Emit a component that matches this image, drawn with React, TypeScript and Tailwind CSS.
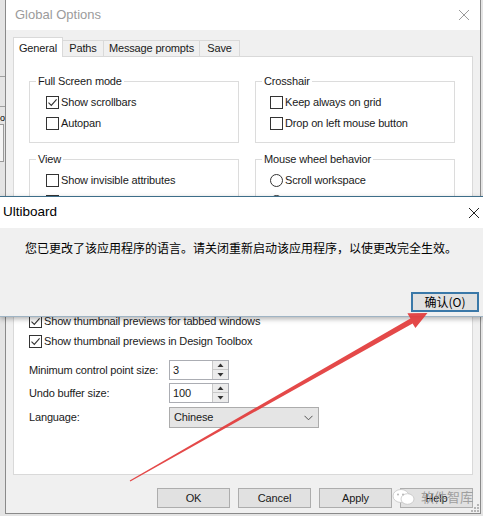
import React from "react";

const Check = ({ checked }: { checked?: boolean }) => (
  <span className="flex h-[13px] w-[13px] shrink-0 items-center justify-center border border-[#333333] bg-white">
    {checked && (
      <svg width="11" height="11" viewBox="0 0 11 11">
        <path d="M1.5 5.6 L4.3 8.4 L9.6 2.4" fill="none" stroke="#333333" strokeWidth="1.1" />
      </svg>
    )}
  </span>
);

const Radio = ({ checked }: { checked?: boolean }) => (
  <span className="flex h-[13px] w-[13px] shrink-0 items-center justify-center rounded-full border border-[#333333] bg-white">
    {checked && <span className="h-[5px] w-[5px] rounded-full bg-[#333333]" />}
  </span>
);

const Row = ({ children, label }: { children: React.ReactNode; label: string }) => (
  <div className="flex h-[21px] items-center gap-[2px]">
    {children}
    <span className="whitespace-nowrap">{label}</span>
  </div>
);

const Group = ({
  title,
  width,
  pad,
  children,
}: {
  title: string;
  width: string;
  pad: string;
  children: React.ReactNode;
}) => (
  <fieldset className={`border border-[#dcdcdc] ${width}`}>
    <legend className="ml-[6px] px-[2px] leading-[16px]">{title}</legend>
    <div className={`pt-[3px] pb-[8px] ${pad}`}>{children}</div>
  </fieldset>
);

const SpinArrows = () => (
  <div className="flex w-[16px] flex-col border-l border-[#c8c8c8]">
    <div className="flex h-[9px] items-center justify-center border-b border-[#c8c8c8] bg-[#ececec]">
      <svg width="7" height="5" viewBox="0 0 7 5">
        <path d="M3.5 0.5 L6.5 4 L0.5 4 Z" fill="#333333" />
      </svg>
    </div>
    <div className="flex flex-1 items-center justify-center bg-[#ececec]">
      <svg width="7" height="5" viewBox="0 0 7 5">
        <path d="M0.5 1 L6.5 1 L3.5 4.5 Z" fill="#333333" />
      </svg>
    </div>
  </div>
);

const Spin = ({ value }: { value: string }) => (
  <div className="flex h-[20px] w-[60px] border border-[#abadb3] bg-white">
    <span className="flex-1 pl-[3px] leading-[18px]">{value}</span>
    <SpinArrows />
  </div>
);

const Button = ({ label }: { label: string }) => (
  <div className="flex h-[20px] w-[73px] items-center justify-center border border-[#adadad] bg-[#e1e1e1]">
    {label}
  </div>
);

export default function App() {
  return (
    <div className="relative h-[516px] w-[483px] overflow-hidden bg-[#e4e4e4] font-['Liberation_Sans',Arial,sans-serif] text-[11px] tracking-[-0.15px] text-[#1a1a1a]">
      {/* window behind, left edge */}
      <div className="absolute left-[-40px] top-[76px] h-[1px] w-[45px] bg-[#a0a0a0]" />
      <div className="absolute left-[-40px] top-[106px] h-[1px] w-[45px] bg-[#a0a0a0]" />
      <div className="absolute left-0 top-[111px] text-[9px] leading-[14px] text-black">o</div>
      <div className="absolute left-[-40px] top-[124px] h-[38px] w-[44px] border border-[#9a9a9a] bg-[#f4f4f4]" />

      {/* Global Options window */}
      <div className="relative ml-[5px] flex h-[514px] w-[476px] flex-col border-x border-b border-[#8a8a8a] bg-[#f0f0f0]">
        <div className="flex h-[30px] shrink-0 items-center justify-between bg-white pl-[9px] pr-[10px]">
          <span className="text-[13px] tracking-normal text-[#9b9b9b]">Global Options</span>
          <svg width="12" height="12" viewBox="0 0 12 12">
            <path d="M1 1 L11 11 M11 1 L1 11" stroke="#9b9b9b" strokeWidth="1" />
          </svg>
        </div>

        <div className="flex flex-1 flex-col px-[7px] pt-[7px]">
          <div className="relative z-10 -mb-[1px] flex h-[20px] items-end">
            <div className="flex h-[20px] w-[50px] items-start justify-center border-x border-t border-[#d9d9d9] bg-white pt-[2px]">
              General
            </div>
            <div className="mb-[1px] flex h-[16px] w-[41px] items-center justify-center border-r border-t border-[#d9d9d9] bg-[#f0f0f0]">
              Paths
            </div>
            <div className="mb-[1px] flex h-[16px] w-[96px] items-center justify-center border-r border-t border-[#d9d9d9] bg-[#f0f0f0]">
              Message prompts
            </div>
            <div className="mb-[1px] flex h-[16px] w-[40px] items-center justify-center border-r border-t border-[#d9d9d9] bg-[#f0f0f0]">
              Save
            </div>
          </div>

          <div className="flex h-[419px] flex-col border border-[#d9d9d9] bg-white px-[15px] pt-[16px]">
            <div className="flex gap-[16px]">
              <Group title="Full Screen mode" width="w-[210px]" pad="pl-[16px]">
                <Row label="Show scrollbars">
                  <Check checked />
                </Row>
                <Row label="Autopan">
                  <Check />
                </Row>
              </Group>
              <Group title="Crosshair" width="w-[200px]" pad="pl-[14px]">
                <Row label="Keep always on grid">
                  <Check />
                </Row>
                <Row label="Drop on left mouse button">
                  <Check />
                </Row>
              </Group>
            </div>

            <div className="mt-[8px] flex gap-[16px]">
              <Group title="View" width="w-[210px]" pad="pl-[16px]">
                <Row label="Show invisible attributes">
                  <Check />
                </Row>
                <Row label="Show pin numbers">
                  <Check checked />
                </Row>
                <Row label="Show net names">
                  <Check />
                </Row>
              </Group>
              <Group title="Mouse wheel behavior" width="w-[200px]" pad="pl-[14px]">
                <Row label="Scroll workspace">
                  <Radio />
                </Row>
                <Row label="Zoom workspace">
                  <Radio checked />
                </Row>
              </Group>
            </div>

            <div className="mt-[9px] flex flex-col">
              {[
                ["Show tooltips", true],
                ["Auto-save layout", false],
                ["Show status bar", true],
                ["Show thumbnail previews for tabbed windows", true],
                ["Show thumbnail previews in Design Toolbox", true],
              ].map(([label, on]) => (
                <div key={label as string} className="flex h-[20px] items-center gap-[2px]">
                  <Check checked={on as boolean} />
                  <span className="whitespace-nowrap">{label as string}</span>
                </div>
              ))}
            </div>

            <div className="mt-[9px] flex h-[20px] items-center">
              <span className="w-[140px]">Minimum control point size:</span>
              <Spin value="3" />
            </div>
            <div className="mt-[3px] flex h-[20px] items-center">
              <span className="w-[140px]">Undo buffer size:</span>
              <Spin value="100" />
            </div>
            <div className="mt-[4px] flex h-[21px] items-center">
              <span className="w-[140px]">Language:</span>
              <div className="flex h-[21px] w-[150px] items-center justify-between border border-[#acacac] bg-[#e5e5e5] pl-[4px] pr-[5px]">
                <span>Chinese</span>
                <svg width="9" height="6" viewBox="0 0 9 6">
                  <path d="M0.5 0.8 L4.5 4.8 L8.5 0.8" fill="none" stroke="#555555" strokeWidth="1" />
                </svg>
              </div>
            </div>
          </div>

          <div className="mt-[13px] flex justify-end gap-[8px]">
            <Button label="OK" />
            <Button label="Cancel" />
            <Button label="Apply" />
            <Button label="Help" />
          </div>
        </div>

        {/* resize grip */}
        <svg className="absolute bottom-[1px] right-[1px]" width="8" height="8" viewBox="0 0 8 8">
          {[
            [6, 0],
            [6, 3],
            [3, 3],
            [6, 6],
            [3, 6],
            [0, 6],
          ].map(([x, y]) => (
            <rect key={`${x}-${y}`} x={x} y={y} width="2" height="2" fill="#b5b5b5" />
          ))}
        </svg>
      </div>

      {/* Ultiboard message box */}
      <div className="absolute left-0 right-0 top-[196px] z-20 flex h-[121px] flex-col border-t border-[#3d6e8a] shadow-[0_2px_5px_rgba(0,0,0,0.3)]">
        <div className="flex h-[31px] items-center justify-between bg-white pl-[3px] pr-[3px]">
          <span className="text-[13.5px] tracking-normal text-black">Ultiboard</span>
          <svg width="12" height="12" viewBox="0 0 12 12">
            <path d="M1 1 L11 11 M11 1 L1 11" stroke="#222222" strokeWidth="1" />
          </svg>
        </div>
        <div className="flex flex-1 flex-col border-b border-[#9fb4c4] bg-[#f0f0f0]">
          <p className="pl-[25px] pt-[10px] font-['Noto_Sans_CJK_SC',sans-serif] text-[12px] leading-[20px] tracking-normal text-black">
            您已更改了该应用程序的语言。请关闭重新启动该应用程序，以使更改完全生效。
          </p>
          <div className="mt-[34px] flex justify-end pr-[4px]">
            <div className="flex h-[20px] w-[68px] items-center justify-center border-2 border-[#3a78a8] bg-[#e1e1e1] font-['Noto_Sans_CJK_SC',sans-serif] text-[12px] tracking-normal text-black">
              确认(O)
            </div>
          </div>
        </div>
      </div>

      {/* red annotation arrow */}
      <svg className="pointer-events-none absolute inset-0 z-30" width="483" height="516" viewBox="0 0 483 516">
        <polygon
          points="129.7,480.6 410.4,318.4 407.4,313.2 427.5,313 415.4,328.1 412.6,323.4 130.3,481.4"
          fill="#e2393a"
          opacity="0.92"
        />
      </svg>

      {/* watermark */}
      <div className="pointer-events-none absolute left-[392px] top-[487px] z-30 flex items-center gap-[5px]">
        <svg width="24" height="18" viewBox="0 0 24 18">
          <ellipse cx="9" cy="8" rx="8" ry="6.5" fill="#ffffff" stroke="#c4c4c4" strokeWidth="0.8" />
          <ellipse cx="15.5" cy="11" rx="6.5" ry="5.3" fill="#ffffff" stroke="#c4c4c4" strokeWidth="0.8" />
          <circle cx="6" cy="6.5" r="0.9" fill="#b0b0b0" />
          <circle cx="11" cy="6.5" r="0.9" fill="#b0b0b0" />
        </svg>
        <span className="font-['Noto_Sans_CJK_SC',sans-serif] text-[13px] tracking-normal text-[#8f8f8f] opacity-80">
          软件智库
        </span>
      </div>
    </div>
  );
}
